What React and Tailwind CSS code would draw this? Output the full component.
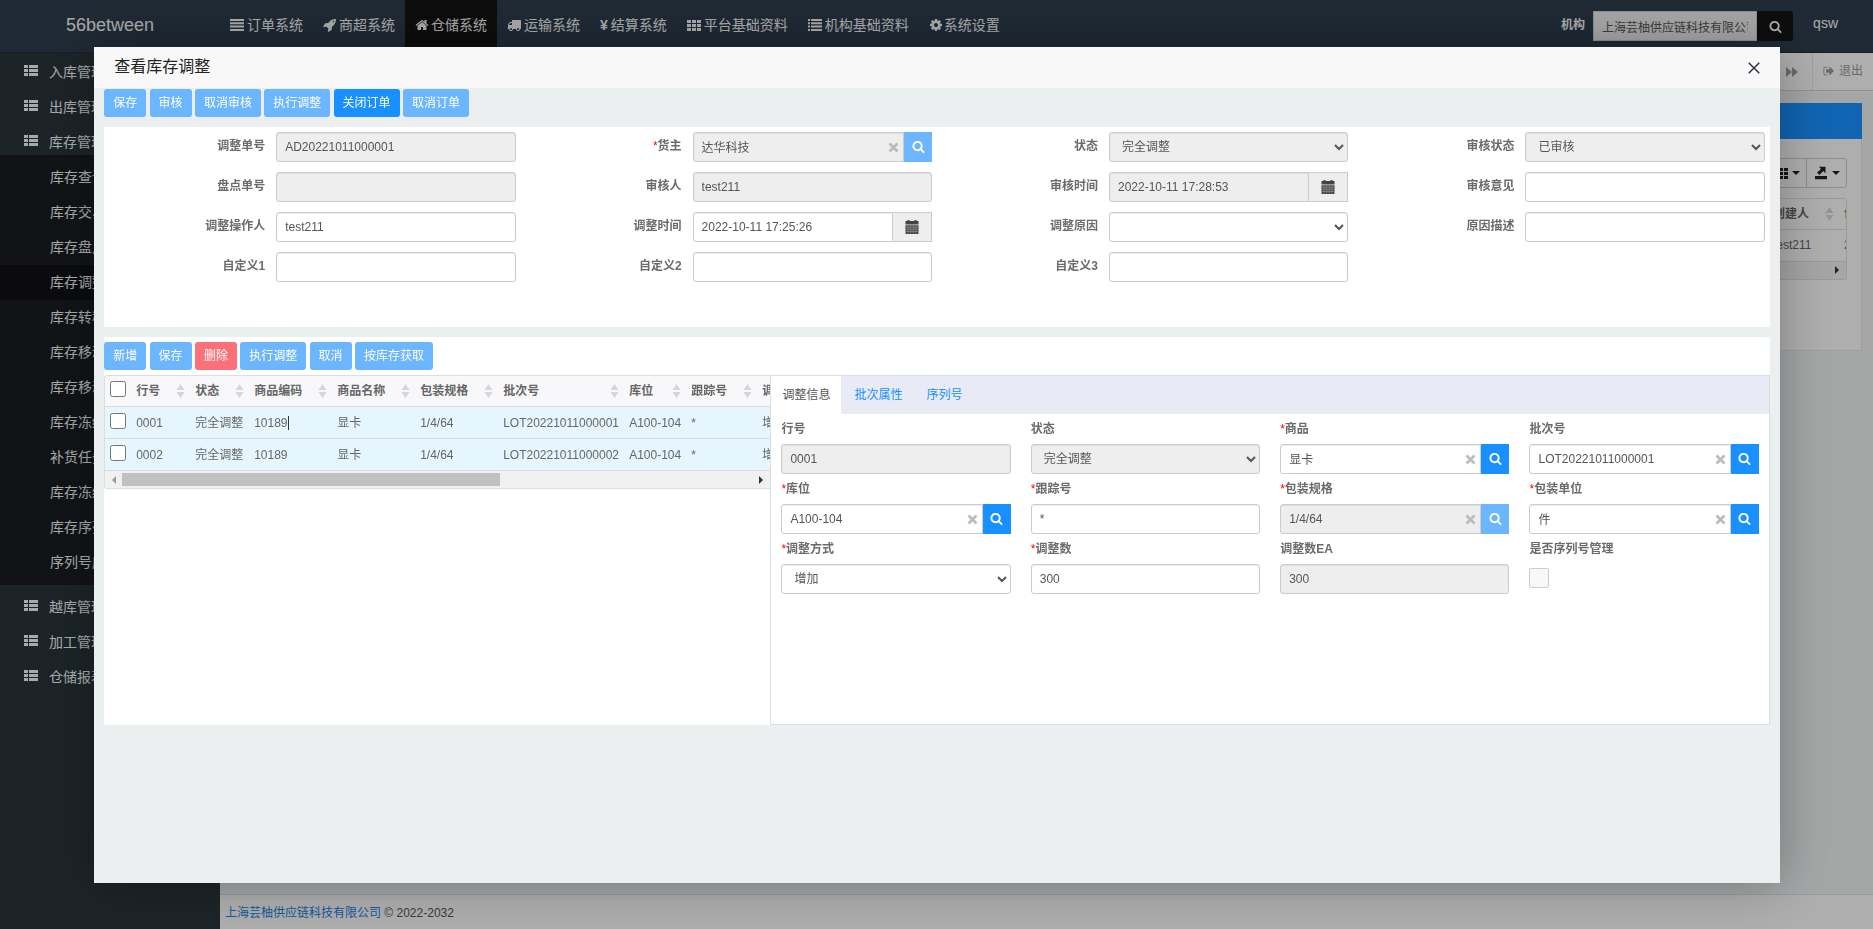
import React, { Fragment, useId } from "react";

/* ---------- icons ---------- */

const TRUCK =
  "M640 1408q0-52-38-90t-90-38-90 38-38 90 38 90 90 38 90-38 38-90zm-384-512h384v-256h-158q-13 0-22 9l-195 195q-9 9-9 22v30zm1280 512q0-52-38-90t-90-38-90 38-38 90 38 90 90 38 90-38 38-90zm256-1088v1024q0 15-4 26.5t-13.5 18.5-16.5 11.5-23.5 6-22.5 2-25.5 0-22.5-.5q0 106-75 181t-181 75-181-75-75-181h-384q0 106-75 181t-181 75-181-75-75-181h-64q-3 0-22.5.5t-25.5 0-22.5-2-23.5-6-16.5-11.5-13.5-18.5-4-26.5q0-26 19-45t45-19v-320q0-8-.5-35t0-38 2.5-34.5 6.5-37 14-30.5 22.5-30l198-198q19-19 50.5-32t58.5-13h160v-192q0-26 19-45t45-19h1024q26 0 45 19t19 45z";
const ROCKET =
  "M1440 448q0-40-28-68t-68-28-68 28-28 68 28 68 68 28 68-28 28-68zm224-288q0 249-75.5 430.5t-253.5 360.5q-81 80-195 176l-20 379q-2 16-16 26l-384 224q-7 4-16 4-12 0-23-9l-64-64q-13-14-8-32l85-276-281-281-276 85q-3 1-9 1-14 0-23-9l-64-64q-17-19-5-39l224-384q10-14 26-16l379-20q96-114 176-195 188-187 358-258t431-71q14 0 24 9.5t10 22.5z";
const HOME =
  "M1472 992v480q0 26-19 45t-45 19h-384v-384h-256v384h-384q-26 0-45-19t-19-45v-480q0-1 .5-3t.5-3l575-474 575 474q1 2 1 6zm223-69l-62 74q-8 9-21 11h-3q-13 0-21-7l-692-577-692 577q-12 8-24 7-13-2-21-11l-62-74q-8-10-7-23.5t11-21.5l719-599q32-26 76-26t76 26l244 204v-195q0-14 9-23t23-9h192q14 0 23 9t9 23v408l219 182q10 8 11 21.5t-7 23.5z";
const SEARCH =
  "M1216 832q0-185-131.5-316.5t-316.5-131.5-316.5 131.5-131.5 316.5 131.5 316.5 316.5 131.5 316.5-131.5 131.5-316.5zm512 832q0 52-38 90t-90 38q-54 0-90-38l-343-342q-179 124-399 124-143 0-273.5-55.5t-225-150-150-225-55.5-273.5 55.5-273.5 150-225 225-150 273.5-55.5 273.5 55.5 225 150 150 225 55.5 273.5q0 220-124 399l343 343q37 37 37 90z";
const COG =
  "M1152 896q0-106-75-181t-181-75-181 75-75 181 75 181 181 75 181-75 75-181zm512-109v222q0 12-8 23t-20 13l-185 28q-19 54-39 91 35 50 107 138 10 12 10 25t-9 23q-27 37-99 108t-94 71q-12 0-26-9l-138-108q-44 23-91 38-16 136-29 186-7 28-36 28h-222q-14 0-24.5-8.5t-11.5-21.5l-28-184q-49-16-90-37l-141 107q-10 9-25 9-14 0-25-11-126-114-165-168-7-10-7-23 0-12 8-23 15-21 51-66.5t54-70.5q-27-50-41-99l-183-27q-13-2-21-12.5t-8-23.5v-222q0-12 8-23t19-13l186-28q14-46 39-92-40-57-107-138-10-12-10-24 0-10 9-23 26-36 98.5-107.5t94.5-71.5q13 0 26 10l138 107q44-23 91-38 16-136 29-186 7-28 36-28h222q14 0 24.5 8.5t11.5 21.5l28 184q49 16 90 37l142-107q9-9 24-9 13 0 25 10 129 119 165 170 7 8 7 22 0 12-8 23-15 21-51 66.5t-54 70.5q26 50 41 98l183 28q13 2 21 12.5t8 23.5z";
const SIGN_OUT =
  "M704 1440q0 4 1 20t.5 26.5-3 23.5-10 19.5-20.5 6.5h-320q-119 0-203.5-84.5t-84.5-203.5v-704q0-119 84.5-203.5t203.5-84.5h320q13 0 22.5 9.5t9.5 22.5q0 4 1 20t.5 26.5-3 23.5-10 19.5-20.5 6.5h-320q-66 0-113 47t-47 113v704q0 66 47 113t113 47h312l11.5 1 11.5 3 8 5.5 7 9 2 13.5zm928-544q0 26-19 45l-544 544q-19 19-45 19t-45-19-19-45v-288h-448q-26 0-45-19t-19-45v-384q0-26 19-45t45-19h448v-288q0-26 19-45t45-19 45 19l544 544q19 19 19 45z";

function Glyph({ d, className }) {
  return (
    <svg viewBox="0 0 1792 1792" fill="currentColor" className={className} aria-hidden="true">
      <path d={d} />
    </svg>
  );
}

const Svg14 = ({ d, className = "size-3.5" }) => (
  <svg viewBox="0 0 14 14" fill="currentColor" className={className} aria-hidden="true">
    <path d={d} />
  </svg>
);
const JUSTIFY = "M0 1h14v2H0zM0 4.3h14v2H0zM0 7.6h14v2H0zM0 10.9h14v2H0z";
const TH = "M0 2h4v3H0zM5 2h4v3H5zM10 2h4v3h-4zM0 6h4v3H0zM5 6h4v3H5zM10 6h4v3h-4zM0 10h4v3H0zM5 10h4v3H5zM10 10h4v3h-4z";
const TH_LIST = "M0 0h4v3H0zM5 0h9v3H5zM0 4h4v3H0zM5 4h9v3H5zM0 8h4v3H0zM5 8h9v3H5z";
const LIST = "M0 1h2v2H0zM3 1h11v2H3zM0 4.3h2v2H0zM3 4.3h11v2H3zM0 7.6h2v2H0zM3 7.6h11v2H3zM0 10.9h2v2H0zM3 10.9h11v2H3z";
const FORWARD = "M1 2l6 5V2l6 5-6 5V7l-6 5z";

function Calendar() {
  return (
    <svg viewBox="0 0 14 14" className="size-3.5" aria-hidden="true">
      <path fill="#444" d="M2.5 0h2v1h5V0h2v1h2v3.6H.5V1h2zM.5 5.2h13V14H.5z" />
      <path stroke="#aaa" strokeWidth=".5" fill="none" d="M1 7.3h12M1 9.4h12M1 11.5h12M3 5.5V13.5M5.6 5.5V13.5M8.4 5.5V13.5M11 5.5V13.5" />
    </svg>
  );
}

function Times({ className }) {
  return (
    <svg viewBox="0 0 11 11" className={className} aria-hidden="true">
      <path d="M1.5 1.5l8 8M9.5 1.5l-8 8" stroke="currentColor" strokeWidth="2.6" />
    </svg>
  );
}

function Sort() {
  return (
    <svg viewBox="0 0 9 16" className="h-4 w-[9px] shrink-0" aria-hidden="true">
      <path d="M4.5 1l4 6h-8zM4.5 15l4-6h-8z" fill="#d6d6d8" />
    </svg>
  );
}

function Caret() {
  return (
    <svg viewBox="0 0 8 4" className="h-1 w-2" fill="currentColor" aria-hidden="true">
      <path d="M0 0h8L4 4z" />
    </svg>
  );
}

function Arrow({ left, className }) {
  return (
    <svg viewBox="0 0 4 8" fill="currentColor" className={className} aria-hidden="true">
      <path d={left ? "M4 0v8L0 4z" : "M0 0v8l4-4z"} />
    </svg>
  );
}

/* ---------- form controls ---------- */

const box =
  "block h-[30px] w-full min-w-0 rounded-[3px] border border-[#ccc] bg-white px-2 text-xs text-[#555] shadow-[inset_0_1px_1px_rgba(0,0,0,0.075)] outline-none disabled:bg-[#eee] disabled:opacity-100";

function Control({ id, kind = "text", value = "", disabled }) {
  if (kind === "select") {
    return (
      <select id={id} className={box} disabled={disabled} defaultValue={value}>
        <option value={value}>{value}</option>
      </select>
    );
  }
  if (kind === "check") {
    return (
      <input
        id={id}
        type="checkbox"
        disabled
        className="mt-1 block size-5 appearance-none rounded-[2px] border border-[#ccc] bg-[#f8f8f8]"
      />
    );
  }
  if (kind === "date") {
    return (
      <div className="flex">
        <input id={id} className={box + " rounded-r-none"} disabled={disabled} defaultValue={value} />
        <button
          type="button"
          aria-label="选择时间"
          className="flex h-[30px] w-[39px] shrink-0 items-center justify-center border border-l-0 border-[#ccc] bg-[#eee]"
        >
          <Calendar />
        </button>
      </div>
    );
  }
  if (kind === "lookup") {
    return (
      <div className="flex">
        <div className="relative min-w-0 flex-1">
          <input id={id} className={box + " rounded-r-none pr-6"} disabled={disabled} defaultValue={value} />
          <button type="button" aria-label="清除" className="absolute top-[10px] right-[5px] text-[#bbb]">
            <Times className="size-[11px]" />
          </button>
        </div>
        <button
          type="button"
          aria-label="查询"
          disabled={disabled}
          className="flex h-[30px] w-7 shrink-0 items-center justify-center bg-[#1890ff] text-white disabled:bg-[#6cb5ff]"
        >
          <Glyph d={SEARCH} className="size-[13px]" />
        </button>
      </div>
    );
  }
  return <input id={id} className={box} disabled={disabled} defaultValue={value} />;
}

function LabelText({ label, required }) {
  return (
    <>
      {required && <span className="font-normal text-[#f00]">*</span>}
      {label}
    </>
  );
}

function SideField(props) {
  const id = useId();
  return (
    <div className="flex pr-[5px]">
      <label htmlFor={id} className="w-[172px] shrink-0 pr-[11px] text-right leading-7 font-bold text-[#6b6b6b]">
        <LabelText {...props} />
      </label>
      <div className="min-w-0 flex-1">
        <Control id={id} {...props} />
      </div>
    </div>
  );
}

function TopField(props) {
  const id = useId();
  return (
    <div className="px-[10px]">
      <label htmlFor={id} className="block h-[30px] leading-[30px] font-bold text-[#6b6b6b]">
        <LabelText {...props} />
      </label>
      <Control id={id} {...props} />
    </div>
  );
}

function ButtonBar({ items }) {
  return (
    <div className="h-7 leading-7">
      {items.map(([text, tone], i) => (
        <Fragment key={text + i}>
          <button
            type="button"
            className={
              "h-7 rounded-[3px] px-[9px] align-top text-xs text-white " +
              (tone === "solid" ? "bg-[#1890ff]" : tone === "danger" ? "bg-[#fb7079]" : "bg-[#6cb5ff]")
            }
          >
            {text}
          </button>{" "}
        </Fragment>
      ))}
    </div>
  );
}

/* ---------- data ---------- */

const NAV = [
  ["订单系统", <Svg14 d={JUSTIFY} />],
  ["商超系统", <Glyph d={ROCKET} className="-mr-px size-3.5" />],
  ["仓储系统", <Glyph d={HOME} className="-mr-px size-3.5" />, true],
  ["运输系统", <Glyph d={TRUCK} className="size-3.5" />],
  ["结算系统", <span className="font-bold">¥</span>],
  ["平台基础资料", <Svg14 d={TH} />],
  ["机构基础资料", <Svg14 d={LIST} />],
  ["系统设置", <Glyph d={COG} className="-mr-0.5 size-3.5" />],
];

const SUB = ["库存查询", "库存交易", "库存盘点", "库存调整", "库存转移", "库存移动", "库存移动", "库存冻结", "补货任务", "库存冻结", "库存序列", "序列号库"];

const HEAD_FIELDS = [
  { label: "调整单号", value: "AD20221011000001", disabled: true },
  { label: "货主", required: true, kind: "lookup", value: "达华科技", disabled: true },
  { label: "状态", kind: "select", value: "完全调整", disabled: true },
  { label: "审核状态", kind: "select", value: "已审核", disabled: true },
  { label: "盘点单号", disabled: true },
  { label: "审核人", value: "test211", disabled: true },
  { label: "审核时间", kind: "date", value: "2022-10-11 17:28:53", disabled: true },
  { label: "审核意见" },
  { label: "调整操作人", value: "test211" },
  { label: "调整时间", kind: "date", value: "2022-10-11 17:25:26" },
  { label: "调整原因", kind: "select" },
  { label: "原因描述" },
  { label: "自定义1" },
  { label: "自定义2" },
  { label: "自定义3" },
];

const LINE_FIELDS = [
  { label: "行号", value: "0001", disabled: true },
  { label: "状态", kind: "select", value: "完全调整", disabled: true },
  { label: "商品", required: true, kind: "lookup", value: "显卡" },
  { label: "批次号", kind: "lookup", value: "LOT20221011000001" },
  { label: "库位", required: true, kind: "lookup", value: "A100-104" },
  { label: "跟踪号", required: true, value: "*" },
  { label: "包装规格", required: true, kind: "lookup", value: "1/4/64", disabled: true },
  { label: "包装单位", required: true, kind: "lookup", value: "件" },
  { label: "调整方式", required: true, kind: "select", value: "增加" },
  { label: "调整数", required: true, value: "300" },
  { label: "调整数EA", value: "300", disabled: true },
  { label: "是否序列号管理", kind: "check" },
];

const COLS = ["行号", "状态", "商品编码", "商品名称", "包装规格", "批次号", "库位", "跟踪号", "调整方式"];
const ROWS = [
  ["0001", "完全调整", "10189", "显卡", "1/4/64", "LOT20221011000001", "A100-104", "*", "增加"],
  ["0002", "完全调整", "10189", "显卡", "1/4/64", "LOT20221011000002", "A100-104", "*", "增加"],
];

/* ---------- page behind the dialog ---------- */

function TopNav() {
  return (
    <header className="flex h-[53px] shrink-0 border-b border-[#222d36] bg-[#2c3c4c] text-[#f4f4f4]">
      <div className="w-[220px] shrink-0 text-center text-lg leading-[50px]">
        <a href="#home">56between</a>
      </div>
      <nav className="flex">
        {NAV.map(([text, icon, active]) => (
          <a
            key={text}
            href="#nav"
            className={"flex h-[52px] items-center gap-[3px] px-[10px] pb-0.5 text-sm leading-5 " + (active ? "bg-[#131313]" : "")}
          >
            {icon}
            {text}
          </a>
        ))}
      </nav>
      <div className="ml-auto flex pt-[11px]">
        <label htmlFor="org" className="pr-2 text-xs leading-7 font-bold">
          机构
        </label>
        <input
          id="org"
          className="block h-[30px] w-[164px] border border-[#ccc] bg-[#eee] px-2 text-xs text-[#555]"
          defaultValue="上海芸柚供应链科技有限公司"
        />
        <button type="button" aria-label="查询机构" className="flex h-[30px] w-9 items-center justify-center rounded-r-[3px] bg-[#131313]">
          <Glyph d={SEARCH} className="size-[13px]" />
        </button>
        <a href="#user" className="pr-[35px] pl-5 text-sm leading-[25px]">
          qsw
        </a>
      </div>
    </header>
  );
}

function MenuItem({ text }) {
  return (
    <a href="#menu" className="flex h-[35px] items-center gap-[11px] pl-6">
      <Svg14 d={TH_LIST} />
      {text}
    </a>
  );
}

function Sidebar() {
  return (
    <aside className="w-[220px] shrink-0 bg-[#29343a] pt-px text-sm text-[#f0f4f5]">
      {["入库管理", "出库管理", "库存管理"].map((t) => (
        <MenuItem key={t} text={t} />
      ))}
      <div className="-mt-1 mb-1 bg-[#1a1c21] py-[5px]">
        {SUB.map((t, i) => (
          <a key={i} href="#sub" className={"block h-[35px] pl-[50px] leading-[35px] " + (i === 3 ? "bg-[#101114]" : "")}>
            {t}
          </a>
        ))}
      </div>
      {["越库管理", "加工管理", "仓储报表"].map((t) => (
        <MenuItem key={t} text={t} />
      ))}
    </aside>
  );
}

function Workspace() {
  return (
    <div className="flex min-w-0 flex-1 flex-col bg-[#eceff0]">
      <div className="flex h-[38px] shrink-0 justify-end border-b border-[#d0d0d0] bg-[#fafafa] text-xs text-[#999]">
        <button type="button" aria-label="下一页签" className="flex w-10 items-center justify-center border-r border-[#e4e4e4]">
          <Svg14 d={FORWARD} />
        </button>
        <a href="#logout" className="flex items-center gap-1 px-[10px] pb-0.5">
          <Glyph d={SIGN_OUT} className="size-3" />
          退出
        </a>
      </div>
      <div className="mx-[11px] mt-3 border border-t-0 border-[#e0e3e5] bg-[#fafafa]">
        <div className="-mx-px h-9 bg-[#1890ff]" />
        <div className="px-[14px] pt-[19px] pb-[70px]">
          <div className="flex justify-end">
            <button type="button" aria-label="列" className="flex h-[30px] w-10 items-center justify-center gap-1 rounded-l-[3px] border border-[#ccc] text-[#222]">
              <Svg14 d={TH} />
              <Caret />
            </button>
            <button type="button" aria-label="导出" className="-ml-px flex h-[30px] w-[41px] items-center justify-center gap-1 rounded-r-[3px] border border-[#ccc] text-[#222]">
              <svg viewBox="0 0 14 14" className="size-3.5" fill="currentColor" aria-hidden="true">
                <path d="M1 10h12v3.2H1zM5 .8h6.5v6.4L9.3 5 5.4 8.9 3 6.6l4-3.7z" />
              </svg>
              <Caret />
            </button>
          </div>
          <div className="mt-[10px] overflow-hidden rounded-[3px] border border-[#ddd]">
            <table className="w-full table-fixed text-left text-xs text-[#666]">
              <colgroup>
                <col />
                <col className="w-[71px]" />
                <col className="w-[7px]" />
              </colgroup>
              <thead>
                <tr className="h-[30px] border-b border-[#ddd]">
                  <th></th>
                  <th className="pl-[5px] font-bold whitespace-nowrap">
                    <div className="flex items-center justify-between pr-[5px]">
                      创建人
                      <Sort />
                    </div>
                  </th>
                  <th className="overflow-hidden pl-[5px] whitespace-nowrap">创建时间</th>
                </tr>
              </thead>
              <tbody>
                <tr className="h-8 border-b border-[#ddd]">
                  <td></td>
                  <td className="pl-[5px]">test211</td>
                  <td className="overflow-hidden pl-[5px] whitespace-nowrap">2022-10-11</td>
                </tr>
              </tbody>
            </table>
            <div className="flex h-[17px] items-center justify-end bg-[#eee] pr-[7px] text-[#333]">
              <Arrow className="h-2 w-1" />
            </div>
          </div>
        </div>
      </div>
      <footer className="mt-auto h-[35px] shrink-0 border-t border-[#ddd] bg-[#fafafa] pl-[5px] text-xs leading-9 text-[#555]">
        <a href="#company" className="text-[#1880e0]">上海芸柚供应链科技有限公司</a> © 2022-2032
      </footer>
    </div>
  );
}

/* ---------- dialog ---------- */

function LinesTable() {
  return (
    <div className="overflow-hidden rounded-l-[3px] border border-r-0 border-[#d9dee0]">
      <table className="w-[740px] table-fixed text-left text-xs text-[#666]">
        <colgroup>
          <col className="w-[26px]" />
          <col className="w-[59px]" />
          <col className="w-[59px]" />
          <col className="w-[83px]" />
          <col className="w-[83px]" />
          <col className="w-[83px]" />
          <col className="w-[126px]" />
          <col className="w-[62px]" />
          <col className="w-[71px]" />
          <col />
        </colgroup>
        <thead>
          <tr className="h-[31px] border-b border-[#d5dde0] bg-[#f8f8fa]">
            <th className="pl-[5px]">
              <input type="checkbox" aria-label="全选" className="mb-1 block size-4" />
            </th>
            {COLS.map((c) => (
              <th key={c} className="pl-[5px] font-bold whitespace-nowrap">
                <div className="flex items-center justify-between pr-[5px]">
                  {c}
                  <Sort />
                </div>
              </th>
            ))}
          </tr>
        </thead>
        <tbody>
          {ROWS.map((row, r) => (
            <tr key={r} className="h-8 border-b border-[#d5dde0] bg-[#e6f6fe]">
              <td className="pl-[5px]">
                <input type="checkbox" aria-label={"选择 " + row[0]} className="mb-1 block size-4" />
              </td>
              {row.map((v, c) => (
                <td key={c} className="pl-[5px] whitespace-nowrap">
                  {r === 0 && c === 2 ? <span className="border-r border-[#333]">{v}</span> : v}
                </td>
              ))}
            </tr>
          ))}
        </tbody>
      </table>
      <div className="flex h-[17px] items-center bg-[#f1f1f1] px-[7px]">
        <Arrow left className="h-2 w-1 text-[#999]" />
        <div className="ml-1.5 h-[13px] w-[58%] bg-[#c1c1c1]" />
        <Arrow className="ml-auto h-2 w-1 text-[#333]" />
      </div>
    </div>
  );
}

function Dialog() {
  return (
    <div className="fixed inset-0 flex items-center justify-center bg-black/30 pt-px pl-px">
      <section
        role="dialog"
        aria-label="查看库存调整"
        className="flex h-[90vh] w-[90vw] flex-col bg-[#ebeff0] shadow-[1px_1px_50px_rgba(0,0,0,0.3)]"
      >
        <header className="flex h-[41px] shrink-0 items-center justify-between bg-[#f8f8f8] px-5">
          <h2 className="text-base text-[#222]">查看库存调整</h2>
          <button type="button" aria-label="关闭">
            <svg viewBox="0 0 12 12" className="mt-0.5 size-3" aria-hidden="true">
              <path d="M.7.7l10.6 10.6M11.3.7L.7 11.3" stroke="#2d2c3b" strokeWidth="1.4" />
            </svg>
          </button>
        </header>
        <div className="min-h-0 flex-1 overflow-hidden px-[10px] pt-px">
          <ButtonBar items={[["保存"], ["审核"], ["取消审核"], ["执行调整"], ["关闭订单", "solid"], ["取消订单"]]} />
          <form className="mt-[10px] grid grid-cols-4 gap-y-[10px] bg-white pt-[5px] pb-[45px]">
            {HEAD_FIELDS.map((f) => (
              <SideField key={f.label} {...f} />
            ))}
          </form>
          <div className="mt-[10px] bg-white pt-[5px]">
            <ButtonBar items={[["新增"], ["保存"], ["删除", "danger"], ["执行调整"], ["取消"], ["按库存获取"]]} />
            <div className="mt-[5px] flex min-h-[350px]">
              <div className="w-2/5 min-w-0">
                <LinesTable />
              </div>
              <div className="w-3/5 border border-[#d9dee0]">
                <div className="flex h-[38px] bg-[#e8ebf5]">
                  <button type="button" className="bg-white px-[11px] text-xs text-[#555]">调整信息</button>
                  <button type="button" className="ml-0.5 px-[11px] text-xs text-[#1890ff]">批次属性</button>
                  <button type="button" className="ml-0.5 px-[11px] text-xs text-[#1890ff]">序列号</button>
                </div>
                <form className="grid grid-cols-4">
                  {LINE_FIELDS.map((f) => (
                    <TopField key={f.label} {...f} />
                  ))}
                </form>
              </div>
            </div>
          </div>
        </div>
      </section>
    </div>
  );
}

export default function App() {
  return (
    <div className="flex min-h-screen flex-col font-['Liberation_Sans','Noto_Sans_CJK_SC',sans-serif] text-xs">
      <TopNav />
      <div className="flex flex-1">
        <Sidebar />
        <Workspace />
      </div>
      <Dialog />
    </div>
  );
}
